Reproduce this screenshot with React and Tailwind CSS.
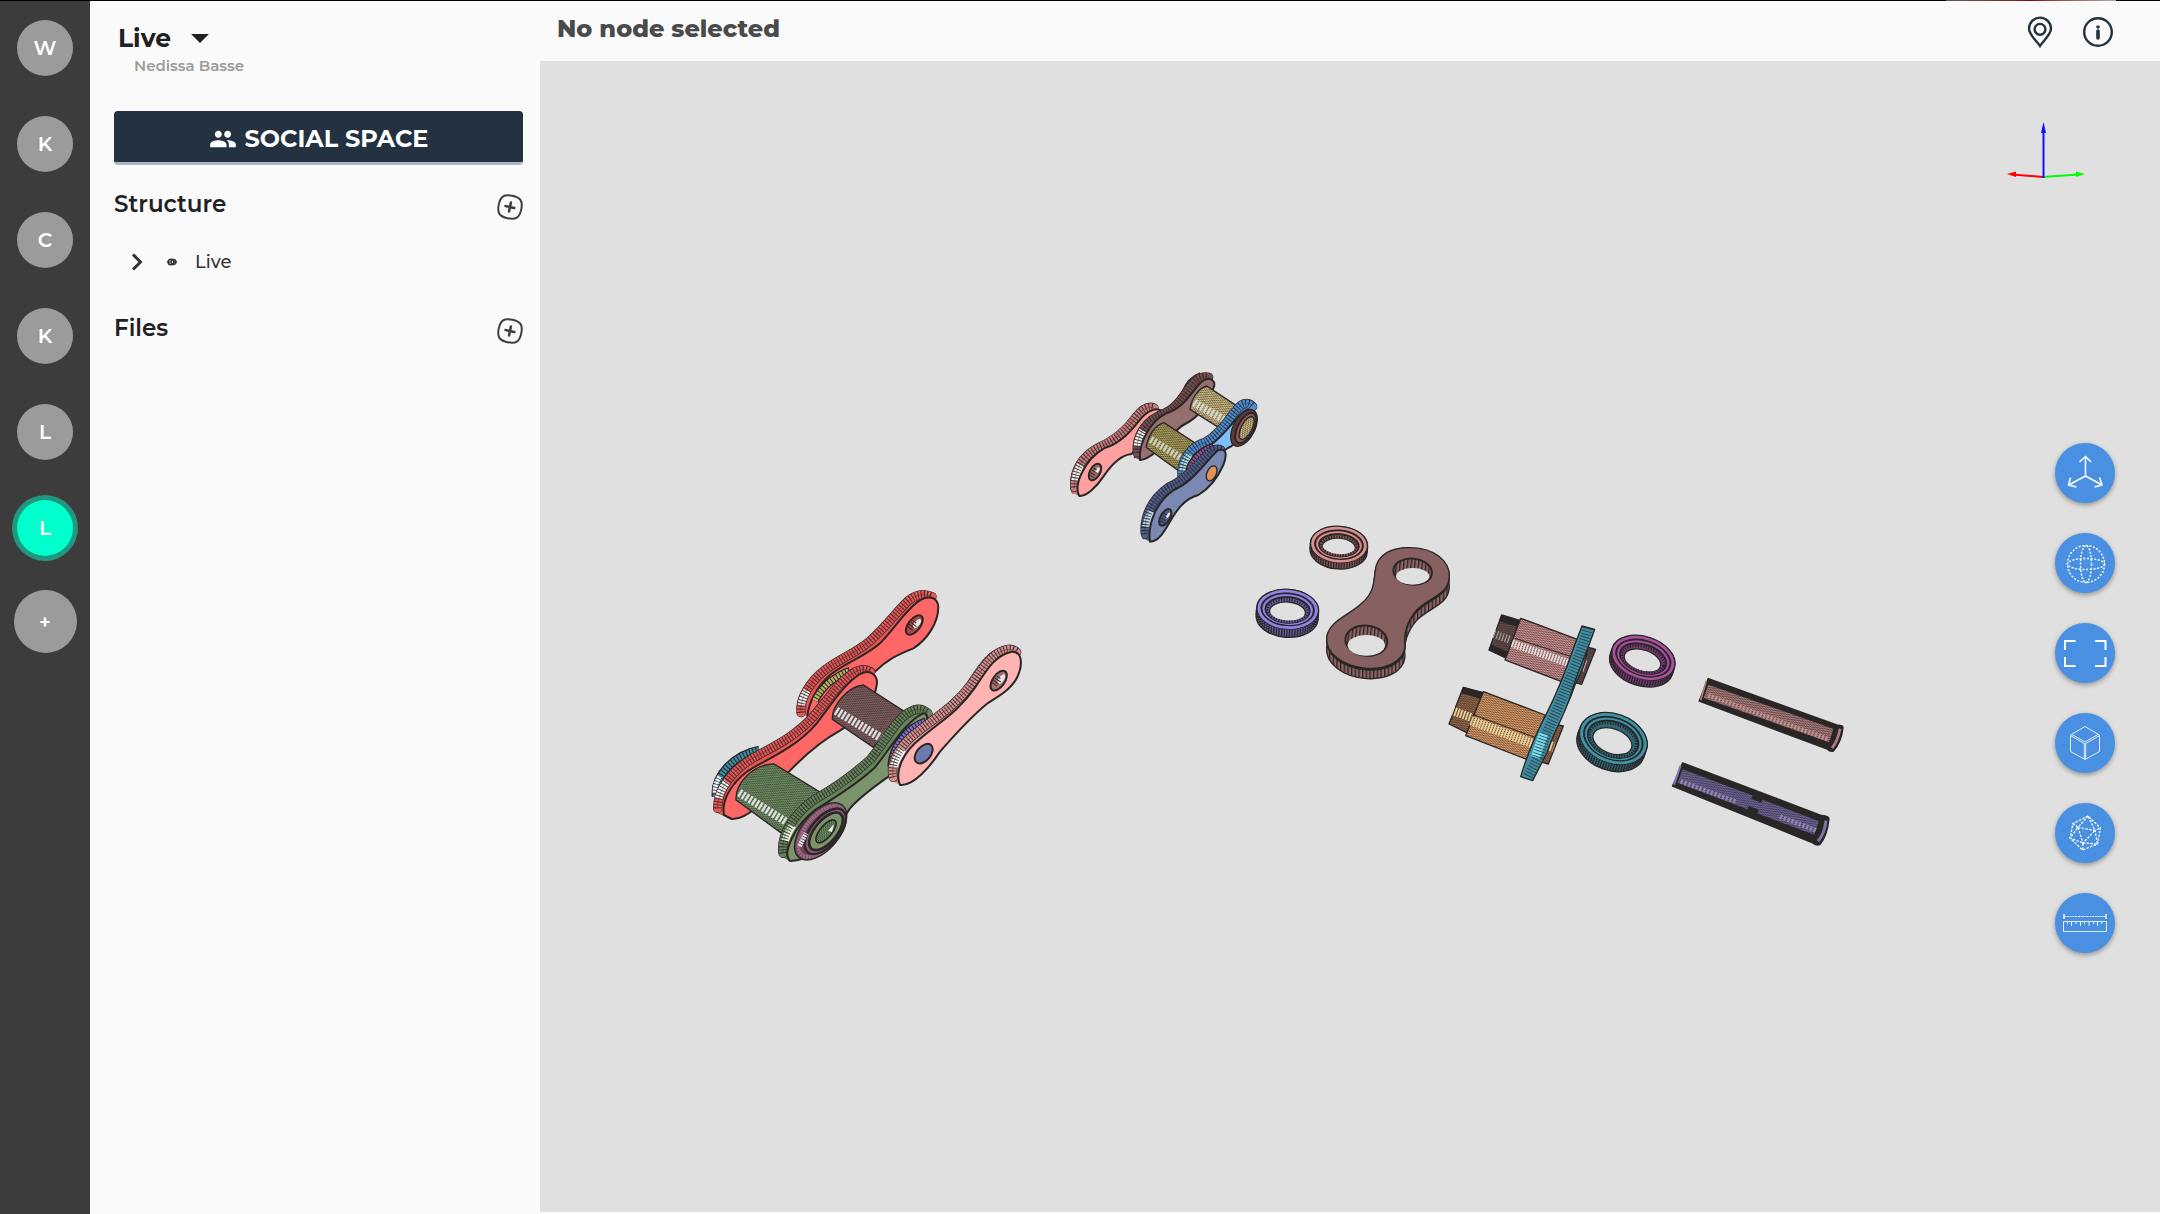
import { MdPeople } from "react-icons/md";

const INK = "#2a2626";
const CANVAS = "#e0e0e0";

const projects = [
  { letter: "W" },
  { letter: "K" },
  { letter: "C" },
  { letter: "K" },
  { letter: "L" },
  { letter: "L", active: true },
];

function ProjectRail() {
  return (
    <nav aria-label="Projects" className="flex w-[90px] shrink-0 flex-col items-center bg-[#3c3c3c] pt-[19px] text-xl font-semibold text-white">
      <div className="flex flex-col gap-10">
        {projects.map((p, i) => (
          <button
            key={i}
            type="button"
            className={
              p.active
                ? "size-14 rounded-full bg-[#00ffcc] ring-[5px] ring-[#209880]"
                : "size-14 rounded-full bg-[#9b9b9b]"
            }
          >
            {p.letter}
          </button>
        ))}
      </div>
      <button type="button" aria-label="Add project" className="mt-[34px] size-[63px] rounded-full bg-[#9b9b9b] text-xl leading-none">
        +
      </button>
    </nav>
  );
}

function AddButton({ label }) {
  return (
    <button type="button" aria-label={label} className="mt-1.5 text-[#3f3f3f]">
      <svg viewBox="0 0 26 26" className="size-[26px]" fill="none" stroke="currentColor" strokeLinecap="round">
        <g transform="rotate(12 13 13)">
          <path d="M13 1.500C21.500 1.500 24.500 4.500 24.500 13S21.500 24.500 13 24.500 1.500 21.500 1.500 13 4.500 1.500 13 1.500Z" strokeWidth="2" />
          <path d="M13 8.500v9M8.500 13h9" strokeWidth="2.600" />
        </g>
      </svg>
    </button>
  );
}

function SidePanel() {
  return (
    <aside className="flex w-[450px] shrink-0 flex-col bg-[#fafafa] pt-[19px] pr-[17px] pl-6 text-[#212121]">
      <button type="button" className="flex items-center gap-5 self-start pl-1 text-[25px] leading-9 font-bold">
        Live
        <svg viewBox="0 0 18 9" className="h-[9px] w-[18px]" fill="currentColor">
          <path d="M0 0h18L9 9Z" />
        </svg>
      </button>
      <p className="pl-5 text-[15px] leading-5 font-semibold text-[#9b9b9b]">Nedissa Basse</p>
      <button
        type="button"
        className="mt-[35px] flex h-[54px] items-center justify-center gap-2 rounded-sm border-b-3 border-[#aab6c4] bg-[#233140] pt-1 text-2xl font-bold text-white"
      >
        <MdPeople className="size-7" />
        SOCIAL SPACE
      </button>

      <section className="mt-[23px]">
        <div className="flex items-start justify-between">
          <h2 className="text-[23px] leading-8 font-semibold">Structure</h2>
          <AddButton label="Add structure" />
        </div>
        <button type="button" className="mt-7 flex items-center pl-[17px] text-lg leading-7 font-medium text-[#333333]">
          <svg viewBox="0 0 12 18" className="h-[18px] w-3" fill="none" stroke="currentColor" strokeWidth="3">
            <path d="M2 1.500 9.500 9 2 16.500" />
          </svg>
          <svg viewBox="0 0 10 8" className="ml-6 h-2 w-2.5" fill="none" stroke="currentColor" strokeWidth="1.500">
            <circle cx="4" cy="4" r="2.800" />
            <circle cx="6.400" cy="4" r="2.400" />
            <path d="M0 4h3M7 4h3" />
          </svg>
          <span className="ml-[18px]">Live</span>
        </button>
      </section>

      <section className="mt-9">
        <div className="flex items-start justify-between">
          <h2 className="text-[23px] leading-8 font-semibold">Files</h2>
          <AddButton label="Add file" />
        </div>
      </section>
    </aside>
  );
}

function TopBar() {
  return (
    <header className="flex h-[60px] shrink-0 items-start justify-between bg-[#fafafa] pr-[46px] pl-[17px]">
      <h1 className="pt-2.5 text-2xl leading-9 font-extrabold text-[#4a4a4a]">No node selected</h1>
      <div className="flex gap-[29px] pt-[15px] text-[#233140]">
        <button type="button" aria-label="Location">
          <svg viewBox="0 0 26 32" className="h-8 w-[26px]" fill="none" stroke="currentColor" strokeWidth="2.400">
            <path d="M13 30C10 25 2 19 2 12.600A11 11 0 0 1 24 12.600C24 19 16 25 13 30Z" />
            <circle cx="13" cy="13.300" r="5.400" />
          </svg>
        </button>
        <button type="button" aria-label="Information">
          <svg viewBox="0 0 32 32" className="size-8" fill="none" stroke="currentColor">
            <circle cx="16" cy="16" r="13.800" strokeWidth="2.400" />
            <path d="M16 15v7" strokeWidth="3.600" strokeLinecap="round" />
            <circle cx="16" cy="11" r="1.800" fill="currentColor" stroke="none" />
          </svg>
        </button>
      </div>
    </header>
  );
}

/* ---------- Assembly drawing ---------- */

function Mesh({ id, color, angle = 0 }) {
  return (
    <pattern id={id} width="12" height="12" patternUnits="userSpaceOnUse" patternTransform={`rotate(${angle})`}>
      <rect width="12" height="12" fill={color} />
      <path d="M0 0L6 6L12 0M0 6L6 12L12 6" stroke={INK} strokeWidth="2.400" fill="none" opacity="0.850" />
    </pattern>
  );
}

const STEPS = [1, 0.8, 0.6, 0.4, 0.2];

/* A plate: its face swept back to give the edge, with ribs along the visible rim. */
function Plate({ face, rim, color, edge, glow, glowColor = "#f6f6f6", dx = -24, dy = -12, width = 24 }) {
  return (
    <g fill="none" strokeLinejoin="round">
      <path d={face} transform={`translate(${dx} ${dy})`} stroke={INK} strokeWidth="5" />
      {STEPS.map((t) => (
        <path key={t} d={face} transform={`translate(${dx * t} ${dy * t})`} fill={edge} stroke={edge} strokeWidth="2" />
      ))}
      <path d={rim} stroke={INK} strokeWidth={width + 4} strokeLinecap="round" />
      <path d={rim} stroke={edge} strokeWidth={width} strokeLinecap="round" />
      {glow && <path d={glow} stroke={glowColor} strokeWidth={width - 2} />}
      <path d={rim} stroke={INK} strokeWidth={width} strokeDasharray="3 6" opacity="0.850" />
      <path d={rim} stroke={INK} strokeWidth="2" opacity="0.600" />
      <path d={face} fill={color} stroke={INK} strokeWidth="6" />
    </g>
  );
}

function Oval({ x, y, rx, ry, r = 0, fill, sw = 4 }) {
  return <ellipse cx={x} cy={y} rx={rx} ry={ry} transform={`rotate(${r} ${x} ${y})`} fill={fill} stroke={INK} strokeWidth={sw} />;
}

function Bore({ x, y, rx, ry, r, fill }) {
  return (
    <g transform={`rotate(${r} ${x} ${y})`}>
      <ellipse cx={x} cy={y} rx={rx} ry={ry} fill={fill} stroke={INK} strokeWidth="6" />
      <ellipse cx={x + 4} cy={y - 8} rx={rx - 10} ry={ry - 17} fill="#e8e8e8" />
      <path
        d={`M${x - rx + 4} ${y}h${rx + 4}M${x - rx + 4} ${y + 8}h${rx + 2}M${x - rx + 6} ${y + 16}h${rx}M${x - rx + 5} ${y - 8}h${rx - 4}`}
        stroke={INK}
        strokeWidth="3"
      />
    </g>
  );
}

function Band({ d, color, dash = "7 3", width = 16 }) {
  return (
    <g fill="none">
      <path d={d} stroke={INK} strokeWidth={width + 8} />
      <path d={d} stroke={color} strokeWidth={width} strokeDasharray={dash} />
    </g>
  );
}

function Ring({ x, y, rx, ry, r, h, light, dark }) {
  return (
    <g transform={`rotate(${r} ${x} ${y})`} fill="none">
      <path
        d={`M${x - rx} ${y}v${h}A${rx} ${ry} 0 0 0 ${x + rx} ${y + h}V${y}A${rx} ${ry} 0 0 0 ${x - rx} ${y}Z M${x - rx * 0.58} ${y + 8}A${rx * 0.58} ${ry * 0.5} 0 0 0 ${x + rx * 0.58} ${y + 8}A${rx * 0.58} ${ry * 0.5} 0 0 0 ${x - rx * 0.58} ${y + 8}Z`}
        fill={dark}
        fillRule="evenodd"
        stroke={INK}
        strokeWidth="4"
      />
      {[0.2, 0.5, 0.8].map((t) => (
        <path
          key={t}
          d={`M${x - rx + 2} ${y + h * t}A${rx - 2} ${ry} 0 0 0 ${x + rx - 2} ${y + h * t}`}
          stroke={INK}
          strokeWidth={h * 0.35}
          strokeDasharray="4 4"
        />
      ))}
      <ellipse cx={x} cy={y} rx={rx - 1} ry={ry - 1} stroke={INK} strokeWidth="4" />
      <ellipse cx={x} cy={y} rx={rx - 7} ry={ry - 6} stroke={light} strokeWidth="9" />
      <ellipse cx={x} cy={y} rx={rx - 14} ry={ry - 12} stroke={INK} strokeWidth="5" />
      <ellipse cx={x} cy={y + 1} rx={rx - 21} ry={ry - 17} stroke={light} strokeWidth="5" />
      <ellipse cx={x} cy={y + 2} rx={rx - 27} ry={ry - 22} stroke={INK} strokeWidth="6" />
      <ellipse cx={x} cy={y + 4} rx={rx - 33} ry={ry - 27} stroke={dark} strokeWidth="7" />
      <ellipse cx={x} cy={y + 4} rx={rx - 33} ry={ry - 27} stroke={INK} strokeWidth="7" strokeDasharray="4 4" />
    </g>
  );
}

const LINK = "M435 215C440 160 490 140 545 143C610 145 660 180 658 230C655 285 600 290 560 330C530 365 520 400 525 440C520 490 460 508 410 505C340 500 285 460 290 410C300 360 360 345 395 310C430 280 432 250 435 215Z";

function RedGreenLink() {
  return (
    <g transform="translate(700 570) scale(0.33333)">
      <Plate
        rim="M303 428C298 385 330 335 375 300C420 265 470 248 510 213C560 168 590 125 625 92C650 72 675 70 696 80"
        color="#ff6666"
        edge="#ec5555"
        glow="M304 405C306 390 312 378 320 362"
        face="M322 440C325 400 350 350 390 315C440 275 500 258 545 215C590 165 615 125 650 98C680 74 712 78 715 110C715 160 680 210 640 235C590 255 560 270 525 305C480 340 400 420 345 430Z"
      />
      <Bore x={643} y={165} rx={18} ry={34} r={38} fill="#b04848" />
      <Band d="M345 392C365 350 405 318 450 302" color="#b9b060" />
      <Band d="M48 680C42 615 105 553 178 540" color="#3a8ba0" width={18} />
      <path d="M45 668C44 650 50 635 58 620" fill="none" stroke="#f4f4f4" strokeWidth="14" strokeDasharray="6 3" />
      <Plate
        rim="M53 715C52 655 102 597 162 562C227 527 292 495 342 437C392 377 422 330 467 305C485 296 500 298 512 306"
        color="#ff6666"
        edge="#ec5555"
        glow="M56 684C60 668 68 652 80 636"
        face="M72 735C62 680 110 620 165 590C230 555 300 520 350 460C400 395 430 345 480 312C515 295 535 320 530 345C525 400 470 450 420 482C350 520 300 570 262 610C210 670 150 750 95 747Z"
      />
      <path d="M397 448C395 410 440 350 490 345L614 425L520 532Z" fill="url(#mesh-brown)" stroke={INK} strokeWidth="4" />
      <path d="M408 422L545 505" stroke="#efefef" strokeWidth="26" strokeDasharray="7 5" opacity="0.900" />
      <path d="M108 690C105 640 160 582 222 582L358 665L248 792Z" fill="url(#mesh-green)" stroke={INK} strokeWidth="4" />
      <path d="M118 668L262 758" stroke="#efefef" strokeWidth="24" strokeDasharray="7 5" opacity="0.900" />
      <Plate
        rim="M249 850C240 795 287 727 342 690C402 655 462 615 512 567C562 507 592 437 642 420C660 414 672 420 684 430"
        color="#7b946b"
        edge="#66855a"
        glow="M256 812C260 796 268 782 278 766"
        glowColor="#e6f2de"
        face="M270 873C245 850 285 765 345 720C400 685 470 645 525 592C575 530 615 455 670 430C710 430 640 560 565 620C520 652 480 680 450 715C400 800 340 875 270 873Z"
      />
      <Band d="M574 590C577 530 620 472 678 454" color="#7c70d0" />
      <Plate
        rim="M580 622C567 575 607 517 657 482C717 435 767 405 815 342C855 287 877 246 924 238Q940 236 950 247"
        color="#ffb3b3"
        edge="#dc9090"
        glow="M582 590C586 570 596 556 608 538"
        face="M600 645C582 600 612 545 662 505C720 455 775 425 825 353C860 300 885 255 935 245C970 243 968 290 950 325C930 362 890 382 860 402C800 452 760 500 720 545C690 590 640 650 600 645Z"
      />
      <Bore x={896} y={332} rx={18} ry={34} r={35} fill="#a87070" />
      <Oval x={671} y={551} rx={21} ry={34} r={40} fill="#6d7aab" sw={6} />
      <Oval x={362} y={784} rx={56} ry={102} r={40} fill="#6a4657" />
      <ellipse cx="364" cy="784" rx="46" ry="92" transform="rotate(40 364 784)" fill="none" stroke="#a06a86" strokeWidth="12" strokeDasharray="7 2" />
      <Oval x={376} y={784} rx={42} ry={82} r={40} fill="#8a5a72" sw={7} />
      <Oval x={378} y={784} rx={33} ry={68} r={40} fill="#7b946b" sw={8} />
      <Oval x={378} y={784} rx={18} ry={42} r={40} fill="url(#mesh-green)" sw={5} />
      <path d="M384 782L402 762L396 786Z" fill="#f0f0f0" />
      <path d="M299 828L318 790" stroke="#eee" strokeWidth="14" strokeDasharray="5 3" />
    </g>
  );
}

function PastelLink() {
  return (
    <g transform="translate(1040 350) scale(0.33333)">
      <Plate
        rim="M104 412C100 360 130 318 172 295C224 272 257 245 287 203C305 180 325 167 342 174"
        color="#ffa0a0"
        edge="#cc7c7c"
        dx={-20}
        dy={-10}
        glow="M106 392C108 374 114 360 122 346"
        face="M118 438C98 400 140 325 192 295C245 280 275 240 305 203C330 178 350 170 368 185L275 312C240 315 210 350 190 380C170 410 140 440 118 438Z"
      />
      <Bore x={165} y={366} rx={15} ry={27} r={30} fill="#a06868" />
      <Band d="M436 130C445 102 462 86 484 78" color="#7a4f50" />
      <Plate
        rim="M292 308C287 260 317 210 370 192C417 172 432 130 462 98C477 82 492 78 506 82"
        color="#967070"
        edge="#7a4f50"
        dx={-16}
        dy={-8}
        glow="M292 288C294 270 300 256 308 242"
        face="M300 330C295 280 330 215 378 190C432 175 455 125 485 95C512 75 530 95 520 115C500 180 460 210 430 225C400 240 350 325 300 330Z"
      />
      <path d="M318 292C325 255 345 225 372 218L482 290L415 362Z" fill="url(#mesh-olive)" stroke={INK} strokeWidth="4" />
      <path d="M332 268L430 328" stroke="#d8d8cc" strokeWidth="22" strokeDasharray="7 5" opacity="0.900" />
      <path d="M450 178C455 145 475 115 500 108L602 175L545 238Z" fill="url(#mesh-gold)" stroke={INK} strokeWidth="4" />
      <path d="M462 158L560 214" stroke="#dedede" strokeWidth="24" strokeDasharray="7 5" opacity="0.900" />
      <Plate
        rim="M426 382C422 332 450 290 496 277C552 244 572 192 604 165C618 157 630 160 638 170"
        color="#80c0ff"
        edge="#4c8fd6"
        dx={-16}
        dy={-8}
        glow="M429 364C432 342 440 328 450 314"
        glowColor="#a8e6f4"
        face="M436 390C435 335 470 300 512 285C560 250 590 195 620 180C650 175 650 200 645 230L572 290C540 300 480 380 436 390Z"
      />
      <Oval x={612} y={234} rx={32} ry={60} r={28} fill="#5d3b3b" />
      <Oval x={617} y={234} rx={24} ry={50} r={28} fill="#8c5a58" sw={6} />
      <Oval x={620} y={234} rx={16} ry={38} r={28} fill="url(#mesh-gold)" />
      <Band d="M450 355C462 325 490 300 520 290" color="#9a4fa0" dash="6 3" />
      <Plate
        rim="M316 552C310 500 337 445 386 412C442 387 474 340 512 305C520 298 532 295 542 300"
        color="#7b88b4"
        edge="#4f5f92"
        dx={-20}
        dy={-10}
        glow="M318 530C321 512 327 498 335 484"
        glowColor="#c4dcea"
        face="M330 575C322 520 350 455 402 420C460 395 492 340 532 302C560 290 562 315 550 345C530 390 500 420 475 435C420 450 400 500 375 540C360 565 345 575 330 575Z"
      />
      <Bore x={376} y={502} rx={14} ry={28} r={30} fill="#4b5a8c" />
      <Oval x={515} y={370} rx={14} ry={24} r={25} fill="#e09458" />
    </g>
  );
}

function BrownLink() {
  return (
    <g transform="translate(1230 500) scale(0.33333)">
      <Ring x={327} y={134} rx={86} ry={55} r={4} h={18} light="#d88f8f" dark="#8c5a5a" />
      <Ring x={173} y={328} rx={93} ry={60} r={4} h={24} light="#9084ea" dark="#6a60a8" />
      <path d={LINK} transform="translate(0 31)" fill="url(#ribs)" stroke={INK} strokeWidth="4" />
      <path d={LINK} transform="translate(0 5)" fill={INK} stroke={INK} strokeWidth="4" />
      <path d={LINK} fill="#876162" stroke={INK} strokeWidth="4" />
      <Oval x={548} y={215} rx={58} ry={39} r={6} fill="url(#ribs)" sw={6} />
      <ellipse cx="548" cy="229" rx="50" ry="25" fill={CANVAS} />
      <Oval x={409} y={422} rx={63} ry={45} r={6} fill="url(#ribs)" sw={6} />
      <ellipse cx="409" cy="436" rx="56" ry="31" fill={CANVAS} />
    </g>
  );
}

function RollerPair() {
  return (
    <g transform="translate(1430 590) scale(0.33333)" stroke={INK} strokeWidth="4" strokeLinejoin="round">
      <path d="M215 75L272 92L230 205L177 180Z" fill="url(#mesh-dark)" />
      <path d="M215 77L268 93L264 108L209 92ZM184 166L236 188L230 204L178 180Z" fill={INK} />
      <path d="M192 132L242 150" stroke="#b0b0b0" strokeWidth="24" strokeDasharray="3 6" />
      <path d="M272 85L442 148L395 275L225 210Z" fill="url(#mesh-rose)" />
      <path d="M246 160L412 218" stroke="#ececec" strokeWidth="24" strokeDasharray="5 4" opacity="0.900" />
      <path d="M255 145L425 200" strokeWidth="3" />
      <path d="M450 165L497 178L455 283L400 268Z" fill="url(#mesh-dark)" />
      <path d="M446 222L470 230" stroke="#d0a0a0" strokeWidth="36" strokeDasharray="3 6" />
      <path d="M100 292L160 308L115 430L57 402Z" fill="url(#mesh-rust)" />
      <path d="M100 293L157 309L151 324L95 308Z" fill={INK} />
      <path d="M66 362L122 382" stroke="#e8d8a0" strokeWidth="26" strokeDasharray="5 4" />
      <path d="M160 305L345 375L300 512L107 437Z" fill="url(#mesh-orange)" />
      <path d="M123 392L312 462" stroke="#efe2ae" strokeWidth="28" strokeDasharray="5 4" opacity="0.900" />
      <path d="M130 374L320 444" strokeWidth="3" />
      <path d="M350 398L400 408L355 522L305 508Z" fill="url(#mesh-rust)" />
      <path d="M342 462L372 472" stroke="#e8cf90" strokeWidth="30" strokeDasharray="5 5" />
      <path d="M472 180C465 230 445 260 435 285C420 330 395 380 372 405L400 330Z" fill="#3f93a8" />
      <path d="M456 108L494 118C470 190 440 250 420 320C403 380 372 420 350 490L308 572L272 560C290 500 318 430 350 370C385 300 415 220 432 170Z" fill="#3e8fa5" />
      <path d="M474 114C455 190 425 250 402 310C380 370 345 430 325 500L292 564" fill="none" strokeWidth="32" strokeDasharray="3 6" opacity="0.700" />
      <path d="M340 432L316 502" stroke="#7de0ee" strokeWidth="28" strokeDasharray="6 3" />
      <Ring x={640} y={204} rx={98} ry={64} r={18} h={20} light="#a8509f" dark="#783a78" />
      <Ring x={550} y={446} rx={105} ry={74} r={20} h={22} light="#3f94a8" dark="#2c6a7a" />
    </g>
  );
}

function Pins() {
  return (
    <g transform="translate(1640 650) scale(0.33333)" stroke={INK} strokeWidth="5" strokeLinejoin="round">
      <path d="M205 86L590 225Q612 226 608 236Q604 275 580 303Q570 306 562 297L178 153Z" fill={INK} />
      <path d="M198 124L575 257" stroke="url(#mesh-pin)" strokeWidth="42" />
      <path d="M205 136L565 268" stroke="#c08f8f" strokeWidth="14" strokeDasharray="6 5" />
      <path d="M199 92L182 150" stroke="#b07c7c" strokeWidth="5" />
      <path d="M600 236Q594 272 576 294" fill="none" stroke="#b07c7c" strokeWidth="8" />
      <path d="M583 232Q576 268 562 292" fill="none" />
      <path d="M128 339L545 497Q570 498 566 510Q562 555 540 583Q528 588 518 578L98 408Z" fill={INK} />
      <path d="M120 378L330 457M360 470L530 534" stroke="url(#mesh-violet)" strokeWidth="44" />
      <path d="M300 446L390 480" stroke="url(#mesh-violet)" strokeWidth="22" />
      <path d="M122 394L290 456M420 500L530 542" stroke="#8f84ae" strokeWidth="14" strokeDasharray="7 5" />
      <path d="M122 346L102 404" stroke="#8278b8" strokeWidth="6" />
      <path d="M558 512Q554 550 534 574" fill="none" stroke="#7c72ac" strokeWidth="9" />
      <path d="M540 506Q534 545 518 570" fill="none" />
    </g>
  );
}

function AxisTriad() {
  return (
    <g strokeWidth="2" fill="none">
      <path d="M2043 177L2012 174.500" stroke="#f00" />
      <path d="M2007 174L2016 171.500V177Z" fill="#f00" />
      <path d="M2043 177L2078 174.500" stroke="#0f0" />
      <path d="M2085 174L2076 171.500V177Z" fill="#0f0" />
      <path d="M2043.500 178V130" stroke="#1010ff" />
      <path d="M2043.500 122L2046 133H2041Z" fill="#1010ff" />
    </g>
  );
}

function Scene() {
  return (
    <svg role="img" aria-label="Exploded chain link assembly" viewBox="540 61 1620 1151" preserveAspectRatio="xMidYMid slice" className="block h-full w-full">
      <defs>
        <Mesh id="mesh-brown" color="#8a6464" angle={30} />
        <Mesh id="mesh-green" color="#749a68" angle={30} />
        <Mesh id="mesh-olive" color="#b8ab5c" angle={30} />
        <Mesh id="mesh-gold" color="#dfca86" angle={30} />
        <Mesh id="mesh-rose" color="#e09a9a" angle={20} />
        <Mesh id="mesh-orange" color="#f0a66a" angle={20} />
        <Mesh id="mesh-rust" color="#a06c48" angle={20} />
        <Mesh id="mesh-dark" color="#6a4e4e" angle={20} />
        <Mesh id="mesh-pin" color="#b88484" angle={20} />
        <Mesh id="mesh-violet" color="#7468a4" angle={20} />
        <pattern id="ribs" width="11" height="40" patternUnits="userSpaceOnUse">
          <rect width="11" height="40" fill="#8f6464" />
          <path d="M2 0V40" stroke={INK} strokeWidth="4" />
        </pattern>
      </defs>
      <RedGreenLink />
      <PastelLink />
      <BrownLink />
      <RollerPair />
      <Pins />
      <AxisTriad />
    </svg>
  );
}

/* ---------- Floating tools ---------- */

const tools = [
  {
    label: "Move",
    icon: (
      <g strokeWidth="1.500">
        <path d="M30.500 33V13.500M30.500 33L13.500 42M30.500 33L47 42" />
        <path d="M24.500 19L30.500 13.500L36 19M15.500 34.500L13.500 42L21.500 44M44.500 34.500L47 42L39.500 44" />
      </g>
    ),
  },
  {
    label: "Rotate",
    icon: (
      <g strokeWidth="1.400" strokeDasharray="2 1.600">
        <circle cx="31" cy="31" r="18.500" />
        <ellipse cx="31" cy="31" rx="5.500" ry="18.500" />
        <ellipse cx="31" cy="31" rx="18.500" ry="5.500" />
      </g>
    ),
  },
  {
    label: "Fit to view",
    icon: <path strokeWidth="2" d="M10 27V18H20.500M40 18H50.500V27M50.500 34V43H40M20.500 43H10V34" />,
  },
  {
    label: "Solid view",
    icon: (
      <g strokeWidth="1" opacity="0.850">
        <path d="M30 13.500L44.500 22V38.500L30 46.500L15.500 38.500V22Z" />
        <path d="M15.500 22.500L30 31L44.500 22.500M17 21.500L30 29L43 21.500M29.300 31V46M30.700 31V46" />
      </g>
    ),
  },
  {
    label: "Wireframe view",
    icon: (
      <g strokeWidth="1.300" strokeDasharray="2.400 1.400">
        <path d="M33 13L18 20.500L15 35L27.500 47L42.500 41L45.500 25Z" />
        <path d="M33 13L23 24.500L40 27.500ZM23 24.500L28 40L40 27.500M18 20.500L23 24.500L15 35L28 40L27.500 47M28 40L42.500 41L40 27.500L45.500 25" />
      </g>
    ),
  },
  {
    label: "Measure",
    icon: (
      <g strokeWidth="1" opacity="0.850">
        <path d="M9 23.500H51" strokeDasharray="2 0.800" />
        <path d="M9 21V26M51 21V26" strokeWidth="1.600" />
        <path d="M8.500 28.500H51.500V38.500H8.500Z" />
        <path d="M12.500 29V31M16.500 29V33M21 29V31M25.500 29V33M29.500 29V31M34 29V33M38.500 29V31M42.500 29V33M46.500 29V31" />
      </g>
    ),
  },
];

function ToolColumn() {
  return (
    <div className="absolute top-1/2 right-[45px] flex -translate-y-[194px] flex-col gap-[30px]">
      {tools.map((t) => (
        <button
          key={t.label}
          type="button"
          aria-label={t.label}
          className="size-[60px] rounded-full bg-[#4a90e2] text-white shadow-[0_2px_5px_rgba(0,0,0,0.350)]"
        >
          <svg viewBox="0 0 60 60" className="size-[60px]" fill="none" stroke="currentColor">
            {t.icon}
          </svg>
        </button>
      ))}
    </div>
  );
}

export default function App() {
  return (
    <div className="flex h-screen flex-col bg-[#fafafa] font-['Montserrat','Inter',sans-serif]">
      <div className="flex h-px shrink-0 justify-end bg-black pr-11">
        <div className="w-[170px] bg-linear-to-r from-[#555555] via-[#8a0010] to-[#aaaaaa]" />
      </div>
      <div className="flex min-h-0 grow">
        <ProjectRail />
        <SidePanel />
        <div className="flex min-w-0 grow flex-col">
          <TopBar />
          <main className="relative mb-0.5 min-h-0 grow overflow-hidden bg-[#e0e0e0]">
            <Scene />
            <ToolColumn />
          </main>
        </div>
      </div>
    </div>
  );
}
